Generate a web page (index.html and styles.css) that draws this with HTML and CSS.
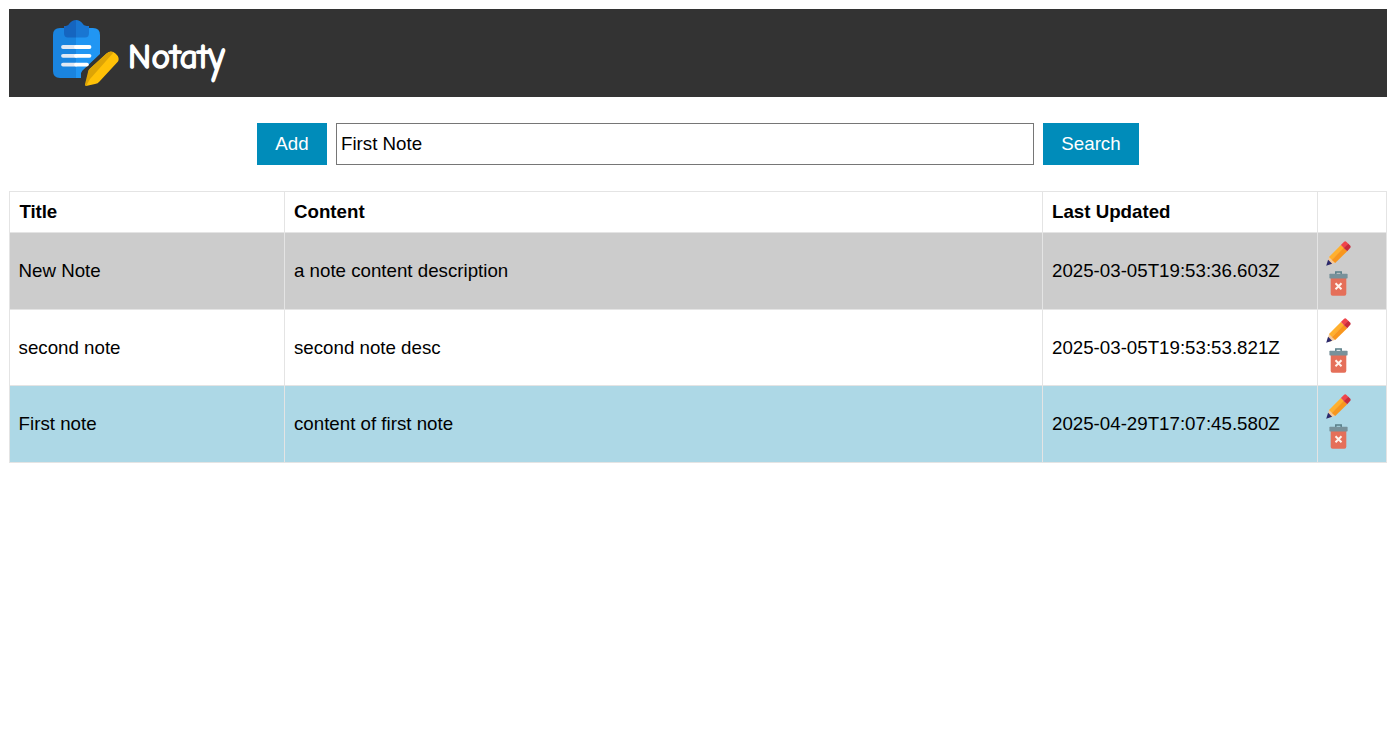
FILE: index.html
```
<!DOCTYPE html>
<html lang="en">
<head>
<meta charset="utf-8">
<title>Notaty</title>
<link rel="stylesheet" href="styles.css">
</head>
<body>
<svg class="defs" aria-hidden="true">
  <symbol id="pencil" viewBox="0 0 25 25">
    <path fill="#f4c89a" d="M1.3 22 3.3 15.6 9.4 21.8 3 24Z"/>
    <path fill="#2b2a6c" d="M0.2 24.8 2.1 18.7 6.1 22.8Z"/>
    <path fill="#ffb02e" d="M3 16 14.9 3.9 18 7 6 19.1Z"/>
    <path fill="#f8961d" d="M5.8 18.9 17.8 6.8 21.2 10.2 9.2 22.1Z"/>
    <path fill="#f0444a" d="M14.9 3.9 17.9 0.9Q19.2 -0.2 20.5 0.9L22.5 3 18 7.2Z"/>
    <path fill="#c92b3b" d="M17.8 7 22.3 2.8 24.1 4.4Q25.2 5.6 24.1 6.9L21.2 10.2Z"/>
  </symbol>
  <symbol id="trash" viewBox="0 0 25 25">
    <path fill="none" stroke="#587e88" stroke-width="1.5" d="M9.8 3V1.1H15.2V3"/>
    <path fill="#e56f59" d="M4.7 6H20.3V22.8Q20.3 24.7 18.4 24.7H6.6Q4.7 24.7 4.7 22.8Z"/>
    <rect fill="#78919a" x="3.4" y="2.7" width="18.2" height="4.7" rx="0.7"/>
    <path fill="none" stroke="#fff3ed" stroke-width="2" d="M9.5 12.2 15.5 18.2M15.5 12.2 9.5 18.2"/>
  </symbol>
</svg>

<header class="header">
  <svg class="logo" viewBox="0 0 68 68" aria-hidden="true">
    <path fill="#1a84df" d="M24 8H8Q1 8 1 15V51Q1 58 8 58H24Z"/>
    <path fill="#2196f3" d="M24 8H41Q48 8 48 15V34L30 51Q29 53 29 58H24Z"/>
    <path fill="#1565c0" d="M24 0Q20 0 17 4Q16 6 12 6V13Q12 17.500 16 17.500H24Z"/>
    <path fill="#1976d2" d="M24 0Q28 0 31 4Q32 6 37 6V13Q37 17.500 33 17.500H24Z"/>
    <path fill="none" stroke="#e3e9f3" stroke-width="3.8" stroke-linecap="round" d="M11 27H24M11 35.800H24M11 44.600H24"/>
    <path fill="none" stroke="#fff" stroke-width="3.8" stroke-linecap="round" d="M24 27H37.500M24 35.800H37.500M24 44.600H35"/>
    <path fill="#333" d="M29 59V53L52 31 57 34 36 65Z"/>
    <path fill="#ffc107" d="M37 49.500 54.500 33.500Q59 29.500 63.500 33.500T66 41.500L47.500 61.500Q46 63.500 43 64L34 66Z"/>
    <path fill="#dda406" d="M36 52Q36 50.500 37 49.500L54.500 33.500Q58 30.500 61.500 32.500L38 59 34 66Q32.500 66 33 64Z"/>
  </svg>
  <span class="brand">Notat<span class="brand-tail">y</span></span>
</header>

<form class="toolbar">
  <button class="button add" type="button">Add</button>
  <input class="search" type="text" value="First Note" aria-label="Search notes">
  <button class="button find" type="button">Search</button>
</form>

<table class="notes">
  <colgroup><col class="col-title"><col class="col-content"><col class="col-date"><col class="col-actions"></colgroup>
  <thead>
    <tr><th>Title</th><th>Content</th><th>Last Updated</th><th></th></tr>
  </thead>
  <tbody>
    <tr class="row shaded"><td>New Note</td><td>a note content description</td><td>2025-03-05T19:53:36.603Z</td><td><div class="actions"><svg><use href="#pencil"/></svg><svg><use href="#trash"/></svg></div></td></tr>
    <tr class="row short"><td>second note</td><td>second note desc</td><td>2025-03-05T19:53:53.821Z</td><td><div class="actions"><svg><use href="#pencil"/></svg><svg><use href="#trash"/></svg></div></td></tr>
    <tr class="row found"><td>First note</td><td>content of first note</td><td>2025-04-29T17:07:45.580Z</td><td><div class="actions"><svg><use href="#pencil"/></svg><svg><use href="#trash"/></svg></div></td></tr>
  </tbody>
</table>
</body>
</html>
```
FILE: styles.css
```
* { box-sizing: border-box; }
body {
  margin: 9px;
  background: #fff;
  color: #000;
  font: 18.72px/21px "Liberation Sans", Arial, sans-serif;
}
.defs { display: none; }
.header {
  display: flex;
  align-items: flex-start;
  height: 88px;
  padding: 11px 0 0 43px;
  background: #333;
}
.logo { width: 68px; height: 68px; }
.brand {
  margin: 17px 0 0 8px;
  color: #fff;
  font: 400 35px/40px "Comic Neue", "Comic Sans MS", cursive;
  letter-spacing: 0.5px;
  -webkit-text-stroke: 1.6px #fff;
}
.brand-tail {
  display: inline-block;
  line-height: 1;
  transform: scaleY(1.3);
  transform-origin: 50% 45%;
}
.toolbar {
  display: flex;
  justify-content: center;
  gap: 9px;
  margin: 26px 0;
}
.button {
  height: 42px;
  padding: 0 0 2px;
  border: 0;
  background: #008cba;
  color: #fff;
  font: inherit;
}
.add { width: 70px; }
.find { width: 96px; }
.search {
  width: 698px;
  height: 42px;
  padding: 0 4px;
  border: 1px solid #767676;
  font: inherit;
  color: #000;
}
.notes {
  width: 1378px;
  table-layout: fixed;
  border-collapse: separate;
  border-spacing: 0;
  border: 1px solid #e4e4e4;
  border-width: 1px 0 0 1px;
}
.col-title, .col-date { width: 275px; }
.col-content { width: 758px; }
.col-actions { width: 69px; }
th, td {
  padding: 0 9px;
  border: 1px solid #e4e4e4;
  border-width: 0 1px 1px 0;
  text-align: left;
  vertical-align: middle;
}
th { height: 41px; padding-bottom: 2px; }
th:first-child { padding-left: 9.5px; letter-spacing: -0.1px; }
.row td { height: 77px; padding-bottom: 2px; }
.row.short td { height: 76px; padding-bottom: 0; }
.row td:first-child { padding-left: 8.6px; }
.row td:last-child { padding: 8px 0 0 8px; vertical-align: top; }
.shaded td { background: #ccc; }
.found td { background: #add8e6; }
.actions { display: flex; flex-direction: column; gap: 5px; }
.actions svg { display: block; width: 25px; height: 25px; }
```
